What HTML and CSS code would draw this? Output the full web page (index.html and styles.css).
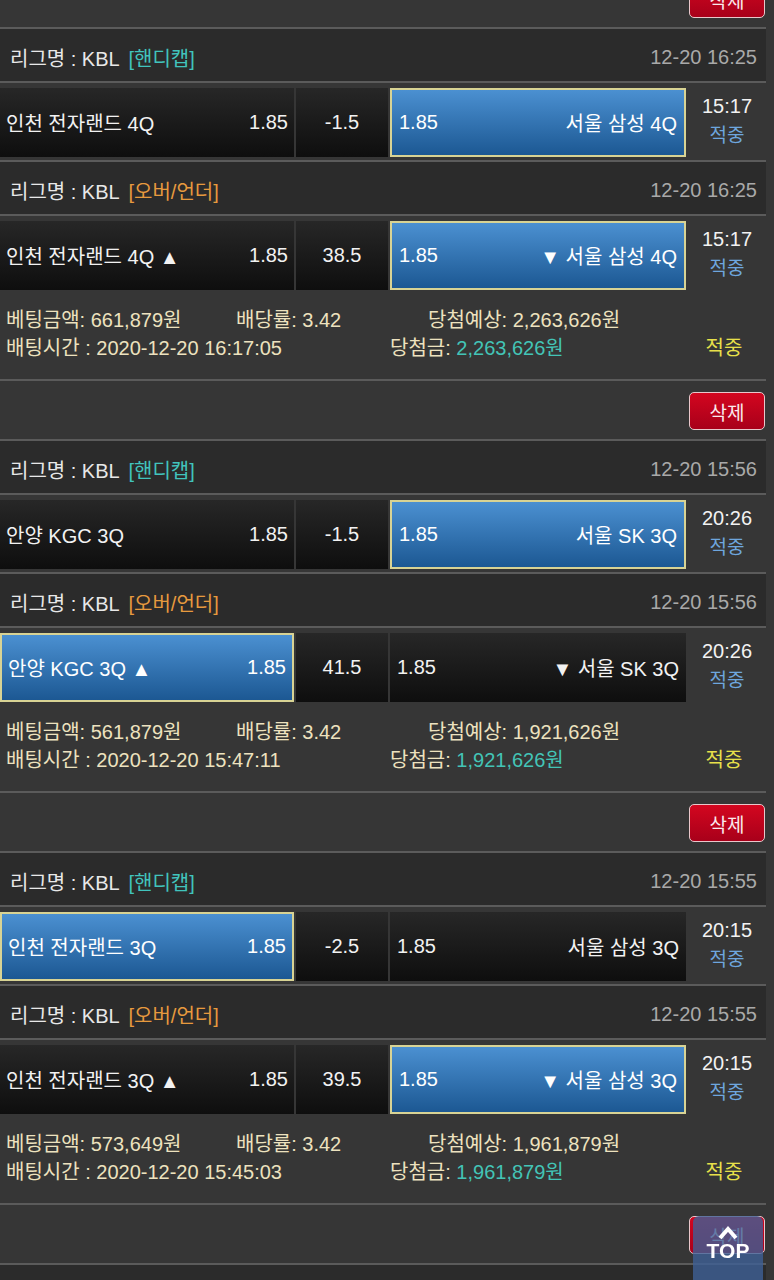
FILE: index.html
```html
<!DOCTYPE html>
<html lang="ko">
<head>
    <meta charset="UTF-8">
    <meta name="viewport" content="width=device-width, initial-scale=1.0">
    <title>배팅내역</title>
    <link rel="stylesheet" href="styles.css">
</head>
<body>
    <main class="bets">
        <!-- bet 1 -->
        <section class="bet">
            <div class="bet-tools"><button class="btn-del">삭제</button></div>
            <div class="match">
                <div class="league"><span>리그명 : KBL <em class="tag tag-hc">[핸디캡]</em></span><span class="league-time">12-20 16:25</span></div>
                <div class="game">
                    <div class="cell home"><span>인천 전자랜드 4Q</span><span>1.85</span></div>
                    <div class="cell line">-1.5</div>
                    <div class="cell away picked"><span>1.85</span><span>서울 삼성 4Q</span></div>
                    <div class="result"><span class="score">15:17</span><span class="hit">적중</span></div>
                </div>
            </div>
            <div class="match">
                <div class="league"><span>리그명 : KBL <em class="tag tag-ou">[오버/언더]</em></span><span class="league-time">12-20 16:25</span></div>
                <div class="game">
                    <div class="cell home"><span>인천 전자랜드 4Q ▲</span><span>1.85</span></div>
                    <div class="cell line">38.5</div>
                    <div class="cell away picked"><span>1.85</span><span>▼ 서울 삼성 4Q</span></div>
                    <div class="result"><span class="score">15:17</span><span class="hit">적중</span></div>
                </div>
            </div>
            <div class="info">
                <div class="info-row">
                    <span class="c1">베팅금액: 661,879원</span>
                    <span class="c2">배당률: 3.42</span>
                    <span>당첨예상: 2,263,626원</span>
                </div>
                <div class="info-row">
                    <span class="c1 wide">배팅시간 : 2020-12-20 16:17:05</span>
                    <span class="grow">당첨금: <b class="win">2,263,626원</b></span>
                    <span class="status">적중</span>
                </div>
            </div>
        </section>

        <!-- bet 2 -->
        <section class="bet">
            <div class="bet-tools"><button class="btn-del">삭제</button></div>
            <div class="match">
                <div class="league"><span>리그명 : KBL <em class="tag tag-hc">[핸디캡]</em></span><span class="league-time">12-20 15:56</span></div>
                <div class="game">
                    <div class="cell home"><span>안양 KGC 3Q</span><span>1.85</span></div>
                    <div class="cell line">-1.5</div>
                    <div class="cell away picked"><span>1.85</span><span>서울 SK 3Q</span></div>
                    <div class="result"><span class="score">20:26</span><span class="hit">적중</span></div>
                </div>
            </div>
            <div class="match">
                <div class="league"><span>리그명 : KBL <em class="tag tag-ou">[오버/언더]</em></span><span class="league-time">12-20 15:56</span></div>
                <div class="game">
                    <div class="cell home picked"><span>안양 KGC 3Q ▲</span><span>1.85</span></div>
                    <div class="cell line">41.5</div>
                    <div class="cell away"><span>1.85</span><span>▼ 서울 SK 3Q</span></div>
                    <div class="result"><span class="score">20:26</span><span class="hit">적중</span></div>
                </div>
            </div>
            <div class="info">
                <div class="info-row">
                    <span class="c1">베팅금액: 561,879원</span>
                    <span class="c2">배당률: 3.42</span>
                    <span>당첨예상: 1,921,626원</span>
                </div>
                <div class="info-row">
                    <span class="c1 wide">배팅시간 : 2020-12-20 15:47:11</span>
                    <span class="grow">당첨금: <b class="win">1,921,626원</b></span>
                    <span class="status">적중</span>
                </div>
            </div>
        </section>

        <!-- bet 3 -->
        <section class="bet">
            <div class="bet-tools"><button class="btn-del">삭제</button></div>
            <div class="match">
                <div class="league"><span>리그명 : KBL <em class="tag tag-hc">[핸디캡]</em></span><span class="league-time">12-20 15:55</span></div>
                <div class="game">
                    <div class="cell home picked"><span>인천 전자랜드 3Q</span><span>1.85</span></div>
                    <div class="cell line">-2.5</div>
                    <div class="cell away"><span>1.85</span><span>서울 삼성 3Q</span></div>
                    <div class="result"><span class="score">20:15</span><span class="hit">적중</span></div>
                </div>
            </div>
            <div class="match">
                <div class="league"><span>리그명 : KBL <em class="tag tag-ou">[오버/언더]</em></span><span class="league-time">12-20 15:55</span></div>
                <div class="game">
                    <div class="cell home"><span>인천 전자랜드 3Q ▲</span><span>1.85</span></div>
                    <div class="cell line">39.5</div>
                    <div class="cell away picked"><span>1.85</span><span>▼ 서울 삼성 3Q</span></div>
                    <div class="result"><span class="score">20:15</span><span class="hit">적중</span></div>
                </div>
            </div>
            <div class="info">
                <div class="info-row">
                    <span class="c1">베팅금액: 573,649원</span>
                    <span class="c2">배당률: 3.42</span>
                    <span>당첨예상: 1,961,879원</span>
                </div>
                <div class="info-row">
                    <span class="c1 wide">배팅시간 : 2020-12-20 15:45:03</span>
                    <span class="grow">당첨금: <b class="win">1,961,879원</b></span>
                    <span class="status">적중</span>
                </div>
            </div>
        </section>

        <!-- bet 4 -->
        <section class="bet">
            <div class="bet-tools"><button class="btn-del">삭제</button></div>
            <div class="match">
                <div class="league"><span>리그명 : KBL <em class="tag tag-hc">[핸디캡]</em></span><span class="league-time">12-20 15:40</span></div>
            </div>
        </section>
    </main>

    <a class="btn-top" href="#">
        <svg width="20" height="14" viewBox="0 0 20 14"><polyline points="2,12 10,3 18,12" fill="none" stroke="#fff" stroke-width="4"/></svg>
        <span>TOP</span>
    </a>
</body>
</html>
```
FILE: styles.css
```css
body {
    margin: 0;
    background-color: #363636;
    color: #e8e8e8;
    font-family: 'Liberation Sans', 'Noto Sans CJK KR', sans-serif;
    font-size: 20px;
    overflow: hidden;
}
.bets { width: 766px; margin-top: -31px; }
.bet { border-bottom: 2px solid #5b5b5b; }

.bet-tools {
    height: 60px;
    box-sizing: border-box;
    border-bottom: 2px solid #5b5b5b;
    display: flex;
    align-items: center;
    justify-content: flex-end;
    padding: 2px 1px 0 0;
}
.btn-del {
    width: 76px;
    height: 38px;
    border: 1px solid #e9c7cb;
    border-radius: 5px;
    background: linear-gradient(#d3061f, #a8001a);
    color: #fbe9ec;
    font-family: inherit;
    font-size: 19px;
    padding: 0;
}

.match + .match { border-top: 2px solid #5b5b5b; }
.league {
    height: 54px;
    box-sizing: border-box;
    border-bottom: 2px solid #5b5b5b;
    background-color: #2b2b2b;
    display: flex;
    align-items: center;
    justify-content: space-between;
    padding: 4px 9px 0 10px;
}
.tag { font-style: normal; margin-left: 4px; }
.tag-hc { color: #41c4bd; }
.tag-ou { color: #e79a3e; }
.league-time { color: #a9a9a9; }

.game {
    height: 77px;
    box-sizing: border-box;
    padding: 5px 0 3px;
    display: flex;
    gap: 2px;
}
.cell {
    height: 69px;
    box-sizing: border-box;
    background: linear-gradient(#272727, #0e0e0e);
    display: flex;
    align-items: center;
    justify-content: space-between;
    color: #f2f2f2;
}
.home { width: 294px; padding: 0 6px; }
.line { width: 92px; justify-content: center; }
.away { width: 296px; padding: 0 7px; }
.picked {
    background: linear-gradient(#4b90d1, #1c5893);
    border: 2px solid #d8d394;
    color: #fff;
}
.result {
    flex: 1;
    display: flex;
    flex-direction: column;
    align-items: center;
    justify-content: center;
    line-height: 29px;
    padding-bottom: 4px;
}
.score { color: #f2f2f2; }
.hit { color: #6ea6de; font-size: 19px; }

.info {
    height: 86px;
    box-sizing: border-box;
    padding: 13px 0 0 6px;
    color: #ede2bf;
}
.info-row { display: flex; line-height: 28px; }
.c1 { width: 230px; }
.c2 { width: 192px; }
.c1.wide { width: 384px; }
.grow { flex: 1; }
.win { font-weight: normal; color: #43c4b6; }
.status { width: 80px; text-align: center; padding-right: 2px; color: #e7e04a; }

.btn-top {
    position: fixed;
    right: 11px;
    bottom: -12px;
    width: 70px;
    height: 76px;
    border-radius: 6px;
    background-color: rgba(62, 96, 150, 0.8);
    display: flex;
    flex-direction: column;
    align-items: center;
    padding-top: 10px;
    box-sizing: border-box;
    text-decoration: none;
    color: #fff;
    font-weight: bold;
    font-size: 21px;
    line-height: 22px;
}
```
